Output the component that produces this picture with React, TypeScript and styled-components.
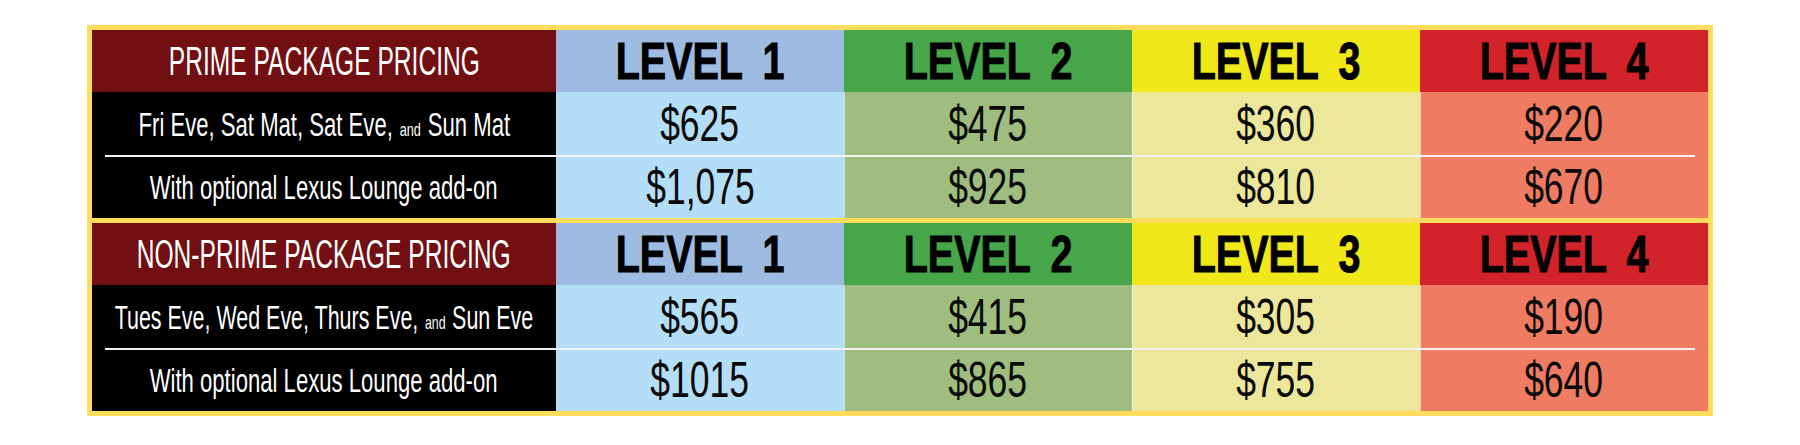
import React from "react";
import styled, { createGlobalStyle } from "styled-components";

const GlobalStyle = createGlobalStyle`
  html, body {
    margin: 0;
    padding: 0;
    background: #ffffff;
  }
  body {
    font-family: "Liberation Sans", Arial, sans-serif;
  }
`;

type Level = { name: string; head: string; cell: string };

const LEVELS: Level[] = [
  { name: "LEVEL 1", head: "#9ebbe2", cell: "#b4def7" },
  { name: "LEVEL 2", head: "#46a649", cell: "#9ebd7e" },
  { name: "LEVEL 3", head: "#f0e818", cell: "#ece79a" },
  { name: "LEVEL 4", head: "#d2232a", cell: "#ee7b62" },
];

type Row = { days?: [string, string]; label?: string; squeeze: number; prices: string[] };
type Section = { title: string; rows: Row[] };

const SECTIONS: Section[] = [
  {
    title: "PRIME PACKAGE PRICING",
    rows: [
      { days: ["Fri Eve, Sat Mat, Sat Eve,", "Sun Mat"], squeeze: 0.67, prices: ["$625", "$475", "$360", "$220"] },
      { label: "With optional Lexus Lounge add-on", squeeze: 0.67, prices: ["$1,075", "$925", "$810", "$670"] },
    ],
  },
  {
    title: "NON-PRIME PACKAGE PRICING",
    rows: [
      { days: ["Tues Eve, Wed Eve, Thurs Eve,", "Sun Eve"], squeeze: 0.65, prices: ["$565", "$415", "$305", "$190"] },
      { label: "With optional Lexus Lounge add-on", squeeze: 0.67, prices: ["$1015", "$865", "$755", "$640"] },
    ],
  },
];

const Page = styled.div`
  display: flex;
  justify-content: center;
  padding-top: 25px;
`;

const Board = styled.div`
  display: flex;
  flex-direction: column;
  gap: 5px;
  padding: 5px;
  background: #ffdc5c;
`;

const Grid = styled.div`
  position: relative;
  display: grid;
  grid-template-columns: 464px repeat(4, 288px);
  grid-template-rows: 62px 64px 62px;
`;

const Rule = styled.div`
  position: absolute;
  left: 13px;
  right: 13px;
  top: 125px;
  height: 2px;
  background: #f2f2f2;
  pointer-events: none;
`;

const Cell = styled.div<{ $bg: string; $seam?: boolean }>`
  display: flex;
  align-items: center;
  justify-content: center;
  min-width: 0;
  background: ${(p) => p.$bg};
  box-shadow: ${(p) => (p.$seam ? "inset 1px 0 0 rgba(255,255,255,0.55)" : "none")};
`;

const Squeeze = styled.span<{ $sx: number }>`
  display: inline-block;
  flex: none;
  white-space: nowrap;
  transform: scaleX(${(p) => p.$sx});
  transform-origin: center;
`;

const Title = styled(Squeeze)`
  color: #ffffff;
  font-size: 41px;
  line-height: 1;
  font-weight: 400;
`;

const LevelName = styled(Squeeze)`
  color: #000000;
  font-size: 52px;
  line-height: 1;
  font-weight: 700;
  word-spacing: 12px;
  -webkit-text-stroke: 1px #000000;
`;

const RowLabel = styled(Squeeze)`
  color: #ffffff;
  font-size: 33px;
  line-height: 1;
`;

const Small = styled.span`
  font-size: 19px;
  margin: 0 1px;
`;

const Price = styled(Squeeze)`
  color: #0a0a0a;
  font-size: 50px;
  line-height: 1;
`;

function PricingBlock({ section }: { section: Section }) {
  return (
    <Grid>
      <Cell $bg="#720f12">
        <Title $sx={0.6}>{section.title}</Title>
      </Cell>
      {LEVELS.map((l) => (
        <Cell key={l.name} $bg={l.head}>
          <LevelName $sx={0.76}>{l.name}</LevelName>
        </Cell>
      ))}
      {section.rows.map((row, ri) => (
        <React.Fragment key={ri}>
          <Cell $bg="#000000">
            <RowLabel $sx={row.squeeze}>
              {row.days ? (
                <>
                  {row.days[0]} <Small>and</Small> {row.days[1]}
                </>
              ) : (
                row.label
              )}
            </RowLabel>
          </Cell>
          {row.prices.map((p, pi) => (
            <Cell key={pi} $bg={LEVELS[pi].cell} $seam={pi > 0}>
              <Price $sx={0.71}>{p}</Price>
            </Cell>
          ))}
        </React.Fragment>
      ))}
      <Rule />
    </Grid>
  );
}

export default function App() {
  return (
    <>
      <GlobalStyle />
      <Page>
        <Board>
          {SECTIONS.map((s) => (
            <PricingBlock key={s.title} section={s} />
          ))}
        </Board>
      </Page>
    </>
  );
}
